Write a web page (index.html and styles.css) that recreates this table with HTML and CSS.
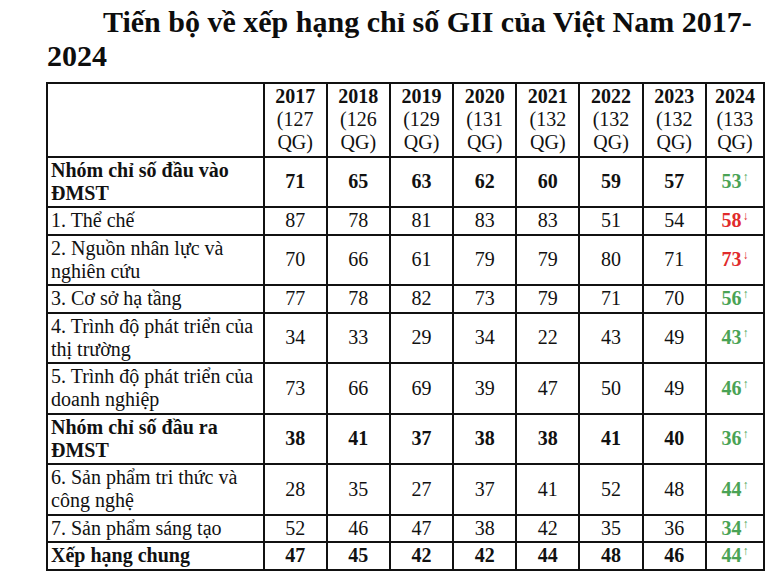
FILE: index.html
```html
<!DOCTYPE html>
<html lang="vi">
<head>
<meta charset="utf-8">
<title>Tiến bộ về xếp hạng chỉ số GII của Việt Nam 2017-2024</title>
<link rel="stylesheet" href="styles.css">
</head>
<body>
<h1 class="title">Tiến bộ về xếp hạng chỉ số GII của Việt Nam 2017-<br>2024</h1>
<table class="gii">
  <colgroup>
    <col class="c-label">
    <col class="c-year"><col class="c-year"><col class="c-year"><col class="c-year">
    <col class="c-year"><col class="c-year"><col class="c-year">
    <col class="c-last">
  </colgroup>
  <thead>
    <tr>
      <th class="label"></th>
      <th><b>2017</b><br>(127<br>QG)</th>
      <th><b>2018</b><br>(126<br>QG)</th>
      <th><b>2019</b><br>(129<br>QG)</th>
      <th><b>2020</b><br>(131<br>QG)</th>
      <th><b>2021</b><br>(132<br>QG)</th>
      <th><b>2022</b><br>(132<br>QG)</th>
      <th><b>2023</b><br>(132<br>QG)</th>
      <th><b>2024</b><br>(133<br>QG)</th>
    </tr>
  </thead>
  <tbody>
    <tr class="bold">
      <td class="label">Nhóm chỉ số đầu vào ĐMST</td>
      <td>71</td><td>65</td><td>63</td><td>62</td><td>60</td><td>59</td><td>57</td>
      <td class="up">53<sup>↑</sup></td>
    </tr>
    <tr>
      <td class="label">1. Thể chế</td>
      <td>87</td><td>78</td><td>81</td><td>83</td><td>83</td><td>51</td><td>54</td>
      <td class="down">58<sup>↓</sup></td>
    </tr>
    <tr>
      <td class="label">2. Nguồn nhân lực và nghiên cứu</td>
      <td>70</td><td>66</td><td>61</td><td>79</td><td>79</td><td>80</td><td>71</td>
      <td class="down">73<sup>↓</sup></td>
    </tr>
    <tr>
      <td class="label">3. Cơ sở hạ tầng</td>
      <td>77</td><td>78</td><td>82</td><td>73</td><td>79</td><td>71</td><td>70</td>
      <td class="up">56<sup>↑</sup></td>
    </tr>
    <tr>
      <td class="label">4. Trình độ phát triển của thị trường</td>
      <td>34</td><td>33</td><td>29</td><td>34</td><td>22</td><td>43</td><td>49</td>
      <td class="up">43<sup>↑</sup></td>
    </tr>
    <tr>
      <td class="label">5. Trình độ phát triển của doanh nghiệp</td>
      <td>73</td><td>66</td><td>69</td><td>39</td><td>47</td><td>50</td><td>49</td>
      <td class="up">46<sup>↑</sup></td>
    </tr>
    <tr class="bold">
      <td class="label">Nhóm chỉ số đầu ra ĐMST</td>
      <td>38</td><td>41</td><td>37</td><td>38</td><td>38</td><td>41</td><td>40</td>
      <td class="up">36<sup>↑</sup></td>
    </tr>
    <tr>
      <td class="label">6. Sản phẩm tri thức và công nghệ</td>
      <td>28</td><td>35</td><td>27</td><td>37</td><td>41</td><td>52</td><td>48</td>
      <td class="up">44<sup>↑</sup></td>
    </tr>
    <tr>
      <td class="label">7. Sản phẩm sáng tạo</td>
      <td>52</td><td>46</td><td>47</td><td>38</td><td>42</td><td>35</td><td>36</td>
      <td class="up">34<sup>↑</sup></td>
    </tr>
    <tr class="bold">
      <td class="label">Xếp hạng chung</td>
      <td>47</td><td>45</td><td>42</td><td>42</td><td>44</td><td>48</td><td>46</td>
      <td class="up">44<sup>↑</sup></td>
    </tr>
  </tbody>
</table>
</body>
</html>
```

FILE: styles.css
```css
html, body {
  margin: 0;
  padding: 0;
  background: #ffffff;
}

body {
  font-family: "Liberation Serif", "Times New Roman", serif;
  color: #111111;
}

.title {
  margin: 5px 0 0 47px;
  padding: 0;
  text-indent: 56px;
  font-size: 30px;
  line-height: 34px;
  font-weight: bold;
  color: #0d0d0d;
}

.gii {
  margin: 9px 0 0 46px;
  border-collapse: collapse;
  table-layout: fixed;
  width: 719px;
  font-size: 20px;
  line-height: 23px;
}

.c-label { width: 216px; }
.c-year { width: 63px; }
.c-last { width: 58px; }

.gii th,
.gii td {
  border: 2px solid #111111;
  padding: 1px 2px 1.5px;
  text-align: center;
  vertical-align: middle;
  font-weight: normal;
}

.gii th b {
  font-weight: bold;
}

.gii .label {
  text-align: left;
  padding-left: 3px;
}

.gii tr.bold td {
  font-weight: bold;
}

.gii td.up,
.gii td.down {
  font-weight: bold;
}

.gii td.up { color: #4aa355; }
.gii td.down { color: #e12b2b; }

.gii sup {
  font-size: 12px;
  font-weight: normal;
  line-height: 0;
  vertical-align: 7px;
  margin-left: 1px;
}
```
